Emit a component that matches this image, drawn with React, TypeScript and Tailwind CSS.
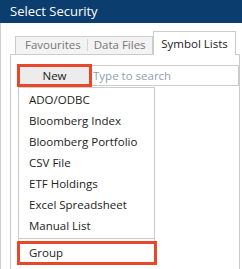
export default function App() {
  const items = [
    "ADO/ODBC",
    "Bloomberg Index",
    "Bloomberg Portfolio",
    "CSV File",
    "ETF Holdings",
    "Excel Spreadsheet",
    "Manual List",
  ];

  return (
    <div className="h-[269px] w-[242px] overflow-hidden bg-white font-['Open_Sans',sans-serif]">
      <div className="flex h-[23px] items-center bg-[#0b3d6e] pl-[10px] text-[13px] text-white">
        Select Security
      </div>

      <div className="h-[246px] border-l border-[#cfcfcf] pl-[9px]">
        {/* tabs */}
        <div className="flex h-[31px] items-end pl-[5px]">
          <div className="flex h-[18px] w-[138px] items-center whitespace-nowrap border border-b-0 border-[#cccccc] bg-[#f3f3f3] pl-[9px] pb-px text-[11.5px] text-[#777777]">
            <span>Favourites</span>
            <span className="mx-[6px] h-[12px] w-px bg-[#d6d6d6]" />
            <span>Data Files</span>
          </div>
          <div className="relative -mb-px flex h-[24px] w-[83px] items-center justify-center whitespace-nowrap border border-b-0 border-[#cccccc] bg-white text-[11.5px] text-[#222222]">
            Symbol Lists
          </div>
        </div>

        {/* panel */}
        <div className="h-[216px] w-[230px] border border-b-0 border-[#cccccc] pl-[6px] pt-[9px]">
          <div className="flex h-[23px] items-stretch">
            <button className="h-[23px] w-[75px] border-[3px] border-[#e8472a] bg-[#ececec] text-[11.5px] text-[#222222]">
              New
            </button>
            <div className="my-px flex flex-1 items-center whitespace-nowrap border border-l-0 border-[#cccccc] pl-[1px] text-[11.5px] text-[#8f9db0]">
              Type to search
            </div>
          </div>

          <div className="ml-px w-[137px] border border-b-0 border-[#cccccc] pt-[1px]">
            {items.map((it) => (
              <div
                key={it}
                className="flex h-[21px] items-center whitespace-nowrap pl-[10px] text-[11.5px] text-[#222222]"
              >
                {it}
              </div>
            ))}
            <div className="mt-[2px] h-px bg-[#cccccc]" />
            <div className="-ml-[2px] mt-[2px] flex h-[24px] w-[140px] items-center border-[3px] border-[#e8472a] pl-[9px] text-[11.5px] text-[#222222]">
              Group
            </div>
          </div>
        </div>
      </div>
    </div>
  );
}
